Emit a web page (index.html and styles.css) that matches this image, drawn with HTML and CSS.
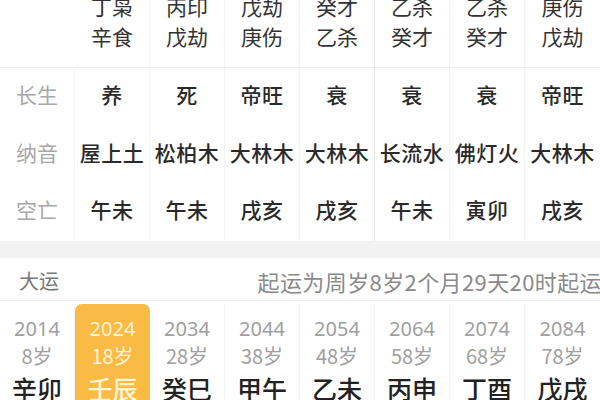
FILE: index.html
```html
<!DOCTYPE html>
<html lang="zh">
<head>
<meta charset="utf-8">
<link rel="stylesheet" href="styles.css">
</head>
<body>
<div class="page">
  <section class="chart">
    <div class="grid top">
      <div class="cell label"></div>
      <div class="cell hid"><span>丁枭</span><span>辛食</span></div>
      <div class="cell hid"><span>丙印</span><span>戊劫</span></div>
      <div class="cell hid"><span>戊劫</span><span>庚伤</span></div>
      <div class="cell hid sep"><span>癸才</span><span>乙杀</span></div>
      <div class="cell hid"><span>乙杀</span><span>癸才</span></div>
      <div class="cell hid"><span>乙杀</span><span>癸才</span></div>
      <div class="cell hid"><span>庚伤</span><span>戊劫</span></div>
    </div>
    <div class="grid rows">
      <div class="cell label">长生</div>
      <div class="cell val">养</div>
      <div class="cell val">死</div>
      <div class="cell val">帝旺</div>
      <div class="cell val sep">衰</div>
      <div class="cell val">衰</div>
      <div class="cell val">衰</div>
      <div class="cell val">帝旺</div>

      <div class="cell label">纳音</div>
      <div class="cell val">屋上土</div>
      <div class="cell val">松柏木</div>
      <div class="cell val">大林木</div>
      <div class="cell val sep">大林木</div>
      <div class="cell val">长流水</div>
      <div class="cell val">佛灯火</div>
      <div class="cell val">大林木</div>

      <div class="cell label">空亡</div>
      <div class="cell val">午未</div>
      <div class="cell val">午未</div>
      <div class="cell val">戌亥</div>
      <div class="cell val sep">戌亥</div>
      <div class="cell val">午未</div>
      <div class="cell val">寅卯</div>
      <div class="cell val">戌亥</div>
    </div>
  </section>
  <div class="band"></div>
  <section class="dayun">
    <div class="dy-head">
      <span class="dy-title">大运</span>
      <span class="dy-note">起运为周岁8岁2个月29天20时起运</span>
    </div>
    <div class="grid dy-list">
      <div class="dy"><span class="yr">2014</span><span class="age">8岁</span><span class="gz">辛卯</span></div>
      <div class="dy active"><span class="yr">2024</span><span class="age">18岁</span><span class="gz">壬辰</span></div>
      <div class="dy"><span class="yr">2034</span><span class="age">28岁</span><span class="gz">癸巳</span></div>
      <div class="dy"><span class="yr">2044</span><span class="age">38岁</span><span class="gz">甲午</span></div>
      <div class="dy"><span class="yr">2054</span><span class="age">48岁</span><span class="gz">乙未</span></div>
      <div class="dy"><span class="yr">2064</span><span class="age">58岁</span><span class="gz">丙申</span></div>
      <div class="dy"><span class="yr">2074</span><span class="age">68岁</span><span class="gz">丁酉</span></div>
      <div class="dy"><span class="yr">2084</span><span class="age">78岁</span><span class="gz">戊戌</span></div>
    </div>
  </section>
</div>
</body>
</html>
```

FILE: styles.css
```css
html, body {
  margin: 0;
  padding: 0;
  background: #fff;
  overflow: hidden;
}
body {
  font-family: "Noto Sans CJK SC", "Noto Sans", sans-serif;
  color: #333;
  width: 600px;
  height: 400px;
}
.page {
  width: 600px;
}
.grid {
  display: grid;
  grid-template-columns: repeat(8, 75px);
}
.chart {
  margin-top: -11px;
}
.top {
  height: 78px;
  border-bottom: 1px solid #efefef;
}
.cell {
  display: flex;
  flex-direction: column;
  align-items: center;
  justify-content: center;
  border-right: 1px solid #f3f3f3;
}
.cell:last-child, .rows .cell:nth-child(8n) {
  border-right: none;
}
.cell.sep {
  border-right-color: #e4e4e4;
}
.hid {
  justify-content: flex-start;
  font-size: 21px;
  line-height: 30px;
  color: #333;
  padding-top: 2px;
}
.top .label {
  border-right-color: #fff;
}
.rows .cell {
  height: 57.5px;
  box-sizing: border-box;
  padding-bottom: 5px;
}
.label {
  font-size: 21px;
  color: #a8a8a8;
}
.val {
  font-size: 21px;
  font-weight: 500;
  color: #2a2a2a;
  letter-spacing: 0.5px;
  white-space: nowrap;
}
.band {
  height: 17px;
  background: #f2f2f2;
}
.dy-head {
  height: 43px;
  box-sizing: border-box;
  padding-top: 4px;
  display: flex;
  align-items: center;
  justify-content: space-between;
  padding-left: 19px;
  border-bottom: 1px solid #f0f0f0;
  white-space: nowrap;
}
.dy-title {
  font-size: 20px;
  color: #777;
}
.dy-note {
  font-size: 22px;
  letter-spacing: 0.4px;
  color: #8a8a8a;
  margin-right: -2px;
}
.dy-list {
  padding-top: 3px;
}
.dy {
  display: flex;
  flex-direction: column;
  align-items: center;
  border-right: 1px solid #f3f3f3;
  height: 100px;
  padding-top: 12px;
  box-sizing: border-box;
}
.dy:last-child {
  border-right: none;
}
.dy.active {
  background: #f9bb45;
  border-radius: 7px 7px 0 0;
  border-right: none;
}
.yr {
  font-family: "Noto Sans", sans-serif;
  font-size: 20px;
  line-height: 26px;
  color: #a0a0a0;
}
.age {
  font-size: 20px;
  line-height: 28px;
  color: #a0a0a0;
}
.gz {
  font-size: 25px;
  font-weight: 500;
  line-height: 36px;
  color: #222;
}
.active .yr, .active .age, .active .gz {
  color: #fff3d2;
}
```
